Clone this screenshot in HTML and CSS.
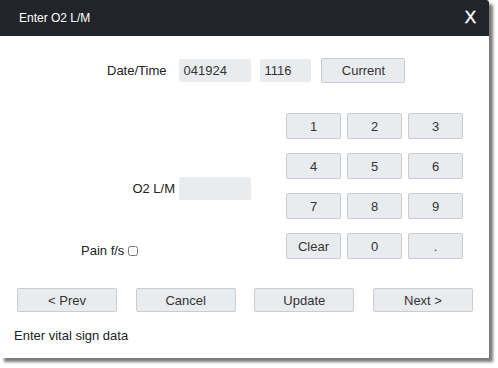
FILE: index.html
```html
<!DOCTYPE html>
<html>
<head>
<meta charset="utf-8">
<link rel="stylesheet" href="styles.css">
</head>
<body>
<div class="dialog">
  <div class="header">
    <span class="title">Enter O2 L/M</span>
    <span class="close">X</span>
  </div>
  <div class="content">
    <div class="date-row">
      <span class="label">Date/Time</span>
      <div class="field date">041924</div>
      <div class="field time">1116</div>
      <button class="btn current">Current</button>
    </div>
    <div class="middle">
      <div class="left">
        <div class="o2-row">
          <span class="label">O2 L/M</span>
          <div class="field o2"></div>
        </div>
        <div class="pain-row">
          <span class="label">Pain f/s</span>
          <input type="checkbox" class="check">
        </div>
      </div>
      <div class="keypad">
        <button class="btn key">1</button>
        <button class="btn key">2</button>
        <button class="btn key">3</button>
        <button class="btn key">4</button>
        <button class="btn key">5</button>
        <button class="btn key">6</button>
        <button class="btn key">7</button>
        <button class="btn key">8</button>
        <button class="btn key">9</button>
        <button class="btn key">Clear</button>
        <button class="btn key">0</button>
        <button class="btn key">.</button>
      </div>
    </div>
    <div class="nav-row">
      <button class="btn nav">&lt; Prev</button>
      <button class="btn nav">Cancel</button>
      <button class="btn nav">Update</button>
      <button class="btn nav">Next &gt;</button>
    </div>
    <div class="status">Enter vital sign data</div>
  </div>
</div>
</body>
</html>
```
FILE: styles.css
```css
html, body {
  margin: 0;
  padding: 0;
  background: #ffffff;
}
body {
  font-family: "Liberation Sans", Arial, sans-serif;
  font-size: 13px;
  color: #222;
  height: 368px;
}
.dialog {
  width: 489px;
  height: 358px;
  background: #fff;
  box-shadow: 4px 4px 3px #7a7a7a;
  border-top-right-radius: 3px;
  display: flex;
  flex-direction: column;
}
.header {
  height: 36px;
  background: #212529;
  color: #fff;
  display: flex;
  align-items: center;
  justify-content: space-between;
  padding: 0 13px 0 19px;
  border-top-right-radius: 3px;
  flex-shrink: 0;
}
.title {
  font-size: 12px;
}
.close {
  font-size: 17px;
  line-height: 1;
  margin-top: -1px;
  -webkit-text-stroke: 0.4px #fff;
}
.content {
  display: flex;
  flex-direction: column;
}
.date-row {
  display: flex;
  align-items: center;
  margin-top: 22px;
  padding-left: 107px;
  height: 24px;
}
.date-row .label {
  margin-right: 13px;
}
.field {
  background: #e9ecef;
  border-radius: 2px;
  height: 23px;
  box-sizing: border-box;
  padding: 4px;
  line-height: 15px;
  font-size: 13px;
  color: #333;
}
.date {
  width: 72px;
  margin-right: 9px;
}
.time {
  width: 51px;
  margin-right: 10px;
}
.btn {
  font-family: "Liberation Sans", Arial, sans-serif;
  font-size: 13px;
  color: #333;
  background: #e9ecef;
  border: 1px solid #c9ccd0;
  border-radius: 2px;
  padding: 0;
  margin: 0;
  box-sizing: border-box;
}
.current {
  width: 84px;
  height: 25px;
}
.middle {
  display: flex;
  margin-top: 31px;
}
.left {
  width: 286px;
  display: flex;
  flex-direction: column;
}
.o2-row {
  display: flex;
  align-items: center;
  justify-content: flex-end;
  padding-right: 35px;
  margin-top: 64px;
}
.o2-row .label {
  margin-right: 4px;
}
.o2 {
  width: 72px;
}
.pain-row {
  display: flex;
  align-items: center;
  padding-left: 81px;
  margin-top: 43px;
}
.check {
  width: 10px;
  height: 10px;
  margin: 0 0 0 4px;
}
.keypad {
  display: grid;
  grid-template-columns: 55px 55px 55px;
  grid-auto-rows: 26px;
  column-gap: 6px;
  row-gap: 14px;
}
.nav-row {
  display: flex;
  justify-content: space-between;
  padding: 0 16px 0 17px;
  margin-top: 29px;
}
.nav {
  width: 100px;
  height: 24px;
}
.status {
  padding-left: 14px;
  margin-top: 16px;
}
```
